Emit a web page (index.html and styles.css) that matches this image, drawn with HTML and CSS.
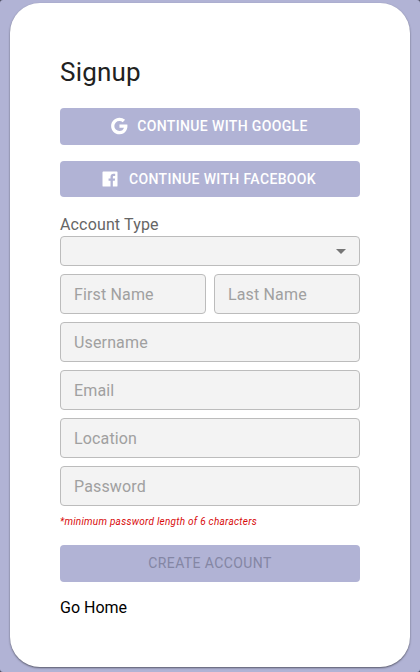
FILE: index.html
```html
<!DOCTYPE html>
<html lang="en">
<head>
<meta charset="utf-8">
<title>Signup</title>
<link rel="stylesheet" href="styles.css">
</head>
<body>
<main class="card">
  <h1 class="title">Signup</h1>
  <button class="button button-google" type="button">
    <svg class="icon" viewBox="0 0 24 24"><path d="M12.545 10.239v3.821h5.445c-.712 2.315-2.647 3.972-5.445 3.972a6.033 6.033 0 1 1 0-12.064c1.498 0 2.866.549 3.921 1.453l2.814-2.814A9.969 9.969 0 0 0 12.545 2C7.021 2 2.543 6.477 2.543 12s4.478 10 10.002 10c8.396 0 10.249-7.85 9.426-11.748z"/></svg>
    <span>Continue with Google</span>
  </button>
  <button class="button button-facebook" type="button">
    <svg class="icon" viewBox="0 0 24 24"><path d="M20 3H4a1 1 0 0 0-1 1v16a1 1 0 0 0 1 1h8.615v-6.96h-2.338v-2.725h2.338v-2c0-2.325 1.42-3.592 3.5-3.592.699-.002 1.399.034 2.095.107v2.42h-1.435c-1.128 0-1.348.538-1.348 1.325v1.735h2.697l-.35 2.725h-2.348V21H20a1 1 0 0 0 1-1V4a1 1 0 0 0-1-1z"/></svg>
    <span>Continue with Facebook</span>
  </button>
  <label class="label">Account Type</label>
  <div class="select">
    <svg class="arrow" viewBox="0 0 10 5"><path d="M0 0h10L5 5z"/></svg>
  </div>
  <form class="fields">
    <div class="name-row">
      <input class="field" type="text" placeholder="First Name">
      <input class="field" type="text" placeholder="Last Name">
    </div>
    <input class="field" type="text" placeholder="Username">
    <input class="field" type="email" placeholder="Email">
    <input class="field" type="text" placeholder="Location">
    <input class="field" type="password" placeholder="Password">
  </form>
  <p class="hint">*minimum password length of 6 characters</p>
  <button class="button button-submit" type="button" disabled>Create Account</button>
  <a class="home">Go Home</a>
</main>
</body>
</html>
```
FILE: styles.css
```css
* {
  box-sizing: border-box;
}

html {
  background: #4c4e60;
}

body {
  margin: 0;
  height: 672px;
  padding: 3px 10px 5px;
  overflow: hidden;
  border-radius: 3px;
  background: #b1b3d5;
  font-family: Roboto, "Liberation Sans", sans-serif;
}

.card {
  display: flex;
  flex-direction: column;
  height: 664px;
  padding: 53px 50px 0;
  border-radius: 30px;
  background: #fff;
  box-shadow: 0 1px 2px rgba(0, 0, 0, 0.5);
}

.title {
  margin: 0 0 20px;
  color: #212121;
  font-size: 26px;
  font-weight: 400;
  line-height: 32px;
  letter-spacing: 0.2px;
}

.button {
  display: flex;
  align-items: center;
  justify-content: center;
  flex: none;
  width: 100%;
  height: 37px;
  padding: 0;
  border: 0;
  border-radius: 4px;
  background: #b1b3d5;
  color: #fff;
  font-family: inherit;
  font-size: 14px;
  font-weight: 500;
  line-height: 24px;
  letter-spacing: 0.36px;
  text-transform: uppercase;
}

.icon {
  width: 20px;
  height: 20px;
  margin-right: 8px;
  fill: currentColor;
}

.button-google {
  margin-bottom: 16px;
  padding: 0 3px 1px 0;
}

.button-facebook {
  height: 36px;
  margin-bottom: 16px;
  padding-right: 4px;
}

.button-facebook .icon {
  margin-right: 9px;
}

.label {
  height: 23px;
  color: #666;
  font-size: 16px;
  line-height: 24px;
  letter-spacing: 0.15px;
}

.select,
.field {
  border: 1px solid #bcbcbc;
  border-radius: 4px;
  background: #f3f3f3;
}

.select {
  display: flex;
  align-items: center;
  justify-content: flex-end;
  height: 30px;
  padding-right: 13px;
}

.arrow {
  width: 10px;
  height: 5px;
  fill: #757575;
}

.fields {
  display: flex;
  flex-direction: column;
  gap: 8px;
  margin-top: 8px;
}

.name-row {
  display: grid;
  grid-template-columns: 1fr 1fr;
  gap: 8px;
}

.field {
  width: 100%;
  height: 40px;
  padding: 1px 13px 0;
  font-family: inherit;
  font-size: 16px;
  letter-spacing: 0.15px;
}

.field::placeholder {
  color: #a0a0a0;
  opacity: 1;
}

.hint {
  margin: 8px 0 0;
  height: 31px;
  color: #d80c0c;
  font-size: 10px;
  font-style: italic;
  line-height: 16px;
  letter-spacing: 0.26px;
}

.button-submit {
  padding-bottom: 1px;
  color: #8486a4;
  font-weight: 400;
  letter-spacing: 0.4px;
}

.home {
  margin-top: 14px;
  color: #000;
  font-size: 16px;
  line-height: 24px;
}
```
